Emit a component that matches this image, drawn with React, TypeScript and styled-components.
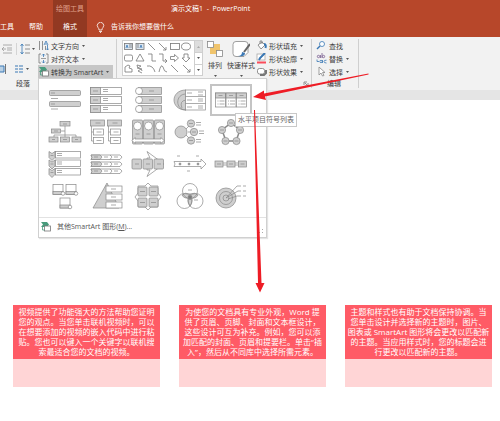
import React from "react";
import styled, { createGlobalStyle } from "styled-components";

const GlobalStyle = createGlobalStyle`
  * { box-sizing: border-box; }
  body { margin: 0; background: #fff; }
  body, button { font-family: "Open Sans", "Noto Sans CJK SC", sans-serif; }
  button { border: 0; padding: 0; margin: 0; background: none; color: inherit; cursor: pointer; }
  svg { display: block; flex: none; }
`;

const Page = styled.div`
  position: relative;
  font-size: 7px;
  line-height: 10px;
  color: #3a3a3a;
  white-space: nowrap;
`;

const Header = styled.header`
  display: flex;
  height: 37px;
  background: #b7472a;
  color: #fff;
`;
const Tabs = styled.nav`
  display: flex;
  align-items: flex-end;
  gap: 15px;
  width: 53px;
`;
const Tab = styled.button`
  font-size: 7px;
  line-height: 20px;
`;
const ContextTab = styled.div`
  display: flex;
  flex-direction: column;
  justify-content: space-between;
  align-items: center;
  width: 34px;
  background: #923922;
`;
const ContextLabel = styled.span`
  line-height: 17px;
  color: #e0a08c;
`;
const TitleArea = styled.div`
  display: flex;
  flex-direction: column;
  justify-content: space-between;
  flex: 1;
`;
const Title = styled.div`
  line-height: 17px;
  padding-left: 84px;
  white-space: pre;
`;
const TellMe = styled.button`
  display: flex;
  align-items: center;
  gap: 6px;
  padding-left: 9px;
  font-size: 7px;
  line-height: 20px;
`;

const Ribbon = styled.div`
  display: flex;
  height: 53px;
  background: #f2f2f2;
`;
const Group = styled.section<{ $width: number }>`
  display: flex;
  flex-direction: column;
  width: ${(p) => p.$width}px;
  margin: 2px 0 2px;
  border-right: 1px solid #cfcfcf;
`;
const GroupBody = styled.div`
  display: flex;
  height: 40px;
`;
const GroupLabel = styled.div<{ $left: number }>`
  display: flex;
  justify-content: space-between;
  padding-left: ${(p) => p.$left}px;
  line-height: 9px;
`;
const IconColumn = styled.div`
  display: flex;
  flex-direction: column;
  justify-content: space-around;
  width: 38px;
`;
const IconRow = styled.div`
  display: flex;
  align-items: center;
  gap: 4px;
`;
const Column = styled.div<{ $left?: number }>`
  display: flex;
  flex-direction: column;
  margin-left: ${(p) => p.$left ?? 0}px;
`;
const Command = styled.button<{ $active?: boolean }>`
  display: flex;
  align-items: center;
  gap: 2px;
  height: 13px;
  padding-right: 3px;
  font-size: 7px;
  background: ${(p) => (p.$active ? "#c6c6c6" : "transparent")};
`;
const BigCommand = styled.button`
  display: flex;
  flex-direction: column;
  align-items: center;
  gap: 3px;
  padding-top: 1px;
  margin-left: 4px;
  font-size: 7px;
  line-height: 10px;
`;
const Anchor = styled.div`
  position: relative;
`;
const Gallery = styled.div`
  display: grid;
  grid-template-columns: 71px 8px;
  height: 36px;
  margin: 1px 0 0 5px;
  border: 1px solid #cfcfcf;
  background: #fff;
`;
const Scroller = styled.div`
  display: grid;
  grid-template-rows: repeat(3, 1fr);
  border-left: 1px solid #cfcfcf;
`;
const ScrollButton = styled.button<{ $off?: boolean }>`
  display: grid;
  place-items: center;
  background: ${(p) => (p.$off ? "#dedede" : "#fff")};
  & + & { border-top: 1px solid #cfcfcf; }
`;
const Ruler = styled.div`
  height: 10px;
  background: #e5e5e5;
`;

const Menu = styled.div`
  position: absolute;
  z-index: 2;
  top: 13px;
  left: 0;
  width: 229px;
  background: #fff;
  border: 1px solid #d0d0d0;
  box-shadow: 1px 1px 1px #e4e4e4;
`;
const Layouts = styled.div`
  display: grid;
  grid-template-columns: repeat(5, 1fr);
  grid-auto-rows: 32px;
  padding: 5px 14px 5px 5px;
  border-bottom: 1px solid #e2e2e2;
`;
const Layout = styled.button<{ $selected?: boolean }>`
  display: grid;
  place-items: center;
  border: ${(p) => (p.$selected ? "2px solid #c4c4c4" : "0")};
  svg { margin: -2px; }
`;
const More = styled.button`
  display: flex;
  align-items: center;
  gap: 6px;
  width: 100%;
  height: 19px;
  padding: 0 2px 3px 1px;
  font-size: 7px;
  color: #555;
`;
const Grip = styled.span`
  align-self: flex-end;
  margin-left: auto;
`;
const Tooltip = styled.div`
  position: absolute;
  z-index: 3;
  top: 34px;
  left: 196px;
  padding: 1px 2px;
  background: #fff;
  border: 1px solid #c8c8c8;
  color: #666;
`;
const Cards = styled.main`
  display: grid;
  grid-template-columns: repeat(3, 1fr);
  gap: 19px;
  padding: 205px 8px 34px 13px;
`;
const Card = styled.article`
  background: #ffd5d6;
  padding-bottom: 28px;
`;
const CardText = styled.p`
  margin: 0;
  padding: 2px 0;
  background: #ff5b66;
  color: #fff;
  font-size: 8px;
  line-height: 10px;
  text-align: center;
`;
const Line = styled.span`
  display: block;
`;
const Arrows = styled.svg`
  position: absolute;
  z-index: 4;
  top: 70px;
  left: 248px;
  pointer-events: none;
`;

const Caret = () => (
  <svg width="5" height="4" viewBox="0 0 5 4"><path d="M1 1h3L2.500 3z" fill="#555" /></svg>
);

type IconName = "direction" | "align" | "smartart" | "fill" | "outline" | "effects" | "find" | "replace" | "select";
const icons: Record<IconName, React.ReactNode> = {
  direction: <><path d="M1.500 1v9M4.500 1v9" stroke="#777" /><path d="M7.500 6v4" stroke="#777" /><path d="M6 5l2-4 2 4M7 4h2M9.500 5v5M8 8.500l1.500 1.500L11 8.500" stroke="#3a78b5" fill="none" /></>,
  align: <><path d="M3 1H1v9h2M8 1h2v9H8" stroke="#777" fill="none" /><path d="M5.500 1v3M5.500 7v3M4 2.500L5.500 1 7 2.500M4 8.500L5.500 10 7 8.500" stroke="#3a78b5" fill="none" /><path d="M3 5.500h5" stroke="#888" /></>,
  smartart: <><path d="M1 1h6l2 2.500-2 2.500H1l2-2.500z" fill="#489b7c" /><rect x="4.500" y="5" width="6" height="5" fill="#fff" stroke="#777" /><path d="M2.500 5v4h2" stroke="#489b7c" fill="none" /></>,
  fill: <><path d="M2 5l4-3 3 3-4 4z" fill="#fff" stroke="#777" /><path d="M4 4V1h2v3" stroke="#777" fill="none" /><path d="M8 4c2 0 2 2 1.500 4" stroke="#3a78b5" strokeWidth="2" fill="none" /></>,
  outline: <><rect x="1" y="1" width="8" height="6" fill="#fff" stroke="#aaa" /><path d="M3 7l1-2 5-5" stroke="#3a78b5" strokeWidth="2" /><path d="M1 9.500h9" stroke="#fb4c5a" strokeWidth="2" /></>,
  effects: <><path d="M4 9h4l2-2V4" stroke="#777" strokeWidth="2" fill="none" /><rect x="1.500" y="2.500" width="7" height="5.500" rx="2" fill="#fff" stroke="#777" /></>,
  find: <><circle cx="6" cy="4" r="2.500" fill="#fff" stroke="#3a78b5" /><path d="M4 6L1 9" stroke="#3a78b5" strokeWidth="1.500" /></>,
  replace: <><g fill="none" stroke="#765a8e"><circle cx="2.500" cy="3.500" r="1.200" /><path d="M4.500 2v3M6 0v5" /><circle cx="7.500" cy="3.500" r="1.200" /></g><g fill="none" stroke="#3a78b5"><circle cx="5" cy="8.500" r="1.200" /><path d="M6.500 7v3M10.500 7.200Q8 7 8 8.500T10.500 10M1 6.500v2h2" /></g></>,
  select: <path d="M3 1v8l2-2 1.500 3L8 9.500 6.500 6.500h2.500z" fill="#fff" stroke="#888" />,
};
const Icon = ({ name }: { name: IconName }) => (
  <svg width="11" height="11" viewBox="0 0 11 11" strokeWidth=".8">{icons[name]}</svg>
);

const paletteShapes = (
  <svg width="70" height="34" viewBox="0 0 70 34" fill="none" stroke="#777" strokeWidth=".8">
    <rect x="1.500" y="2.500" width="8" height="6" fill="#dce6f0" /><path d="M3 7l1-3 1 3" stroke="#3a78b5" /><path d="M6 4h3M6 6h3" />
    <rect x="13" y="2.500" width="8" height="6" fill="#dce6f0" /><path d="M17 7l1-3 1 3" stroke="#3a78b5" /><path d="M14 4h2M14 6h2" />
    <path d="M25 2l7 7M36 2l7 7M43 6v3h-3" /><rect x="47.500" y="2.500" width="9" height="6" /><ellipse cx="63" cy="5.500" rx="4.500" ry="3.500" />
    <rect x="1.500" y="14" width="8" height="6" rx="1.500" /><path d="M13 20l4-7 4 7zM25 13h4v7h4M36 13h4v7h4M42 18l2 2-2 2M47.500 15.500h4v-2l4 3.500-4 3.500v-2h-4zM61 13h4v4h2l-4 4-4-4h2z" />
    <path d="M2 31V26l3-2 2 1-1 2 3 1v3zM14 24l4 1-3 2 3 1-3 2 4 2M14 24l1 4M18 27l1 3M24 25q6-1 8 6M36 31q2-9 4-5 1 5 4 5M48 24l7 7M60 24l7 7M67 28v3h-3" />
  </svg>
);

const arrange = (
  <svg width="16" height="18" viewBox="0 0 16 18"><path d="M3 4h10v10H3z" fill="#f0c46c" /><g fill="#fff" stroke="#888" strokeWidth=".8"><rect x=".5" y="1.500" width="6" height="6" /><rect x="9.500" y="10.500" width="6" height="6" /></g></svg>
);
const quickStyle = (
  <svg width="18" height="18" viewBox="0 0 18 18"><path d="M4 1.500h9a3 3 0 0 1 3 3v8l-4 4H4a3 3 0 0 1-3-3v-9a3 3 0 0 1 3-3z" fill="#fff" stroke="#888" strokeWidth=".8" /><path d="M18 4l-6 8" stroke="#666" strokeWidth="2" /><path d="M6 16q4 0 4-4l3 1q0 4-7 3z" fill="#3a78b5" /></svg>
);

const G = "#cfcfcf";
const layouts: { name: string; art: React.ReactNode }[] = [
  { name: "垂直项目符号列表", art: <><rect x="2.500" y="4.500" width="31" height="5" rx="1" fill={G} /><rect x="2.500" y="15.500" width="31" height="5" rx="1" fill={G} /><path d="M4 7h4M4 12.500h7M4 18h4M4 23h7" /></> },
  { name: "垂直块列表", art: [1.5, 10.5, 19.5].map((y) => <g key={y}><rect x="2.500" y={y} width="31" height="7" fill="#fff" /><rect x="2.500" y={y} width="10" height="7" fill={G} /><path d={`M5 ${y + 3.5}h5M15 ${y + 2}h5M15 ${y + 4}h5`} /></g>) },
  { name: "垂直图片列表", art: [1.5, 10.5, 19.5].map((y) => <g key={y}><rect x="8.500" y={y} width="23" height="7" fill={G} /><circle cx="9" cy={y + 3.5} r="3.500" fill="#fff" /><path d={`M19 ${y + 3.5}h5`} /></g>) },
  { name: "目标列表", art: <><path d="M14 4C-2 4-2 24 14 24z" fill={G} /><path d="M14 8C3 8 3 24 14 24M14 14Q7 15 10 22" fill="none" /><rect x="13.500" y="4" width="20" height="20" fill="#fff" /><path d="M13.500 10.500h20M13.500 17.500h20M15 7h5M15 14h5M15 21h5M26 6h5M26 9h5M26 13h5M26 15h5M26 20h5M26 22h5" /></> },
  { name: "水平项目符号列表", art: [2.5, 13, 23.5].map((x) => <g key={x}><rect x={x} y="7" width="10" height="14" fill="#fff" /><rect x={x} y="7" width="10" height="5" fill={G} /><path d={`M${x + 3} 9.500h4M${x + 2} 15h1M${x + 4} 15h5M${x + 2} 18h1M${x + 4} 18h5`} /></g>) },
  { name: "组织结构图", art: <><path d="M18 8v11M14 13h4M7 19v-2h22v2" fill="none" /><g fill={G}><rect x="13" y="3.500" width="10" height="4.500" /><rect x="4.500" y="11" width="9" height="4" /><rect x="2" y="19" width="9" height="5" /><rect x="13.500" y="19" width="9" height="5" /><rect x="25" y="19" width="9" height="5" /></g><path d="M16 6h4M7 13h4M5 21.500h3M16 21.500h4M28 21.500h3" /></> },
  { name: "层次结构列表", art: [2.5, 19.5].map((x) => <g key={x}><path d={`M${x + 1} 8v15h2M${x + 1} 14h2`} fill="none" /><rect x={x} y="2" width="14" height="6" fill={G} /><rect x={x + 3} y="11" width="10" height="6" fill="#fff" /><rect x={x + 3} y="19.500" width="10" height="6" fill="#fff" /><path d={`M${x + 5} 5h5M${x + 6} 14h5M${x + 6} 22.500h5`} /></g>) },
  { name: "连续图片列表", art: <>{[2.5, 13.5, 24.5].map((x) => <g key={x}><rect x={x} y="2" width="10" height="24" rx="1" fill={G} /><circle cx={x + 5} cy="8" r="4" fill="#fff" /><path d={`M${x + 3} 16h4`} /></g>)}<path d="M5 21h26v-1.500l3 3-3 3V24H5v1.500l-3-3 3-3z" fill="#fff" /></> },
  { name: "射线循环", art: <><path d="M14 11l4-4M16 14h6M14 17l4 4" /><circle cx="9" cy="14" r="6" fill={G} />{[[19, 5.5], [22, 14], [19, 22.5]].map(([x, y]) => <g key={y}><circle cx={x} cy={y} r="3.700" fill={G} /><path d={`M${x - 2} ${y}h4M${x + 5} ${y - 1}h5M${x + 5} ${y + 1.5}h5`} /></g>)}</> },
  { name: "基本循环", art: <><path d="M18 5l9 7-4 11H13L9 12z" fill="none" strokeWidth="1.500" />{[[18, 5], [9, 12], [27, 12], [12.5, 23], [23.5, 23]].map(([x, y]) => <g key={x}><circle cx={x} cy={y} r="3.600" fill={G} /><path d={`M${x - 2} ${y}h4`} /></g>)}</> },
  { name: "垂直V形列表", art: [1.5, 10, 18.5].map((y) => <g key={y}><rect x="8.500" y={y} width="25" height="6.500" fill="#fff" /><path d={`M2 ${y}l3 2 3-2v6l-3 3-3-3z`} fill={G} /><path d={`M3.500 ${y + 4}h3M10 ${y + 2}h5M10 ${y + 4}h5`} /></g>) },
  { name: "V形列表", art: [5, 12, 19].map((y) => <g key={y}><path d={`M3 ${y}h29l2 2-2 2.500H3l1-2z`} fill="#fff" /><path d={`M3 ${y}h9l2 2-2 2.500H3l1-2z`} fill={G} /><path d={`M22 ${y}l2 2-2 2.500M6 ${y + 2}h4M16 ${y + 2}h4M26 ${y + 2}h4`} fill="none" /></g>) },
  { name: "连续块流程", art: <><path d="M17 1.500L34 14 17 26.500 20 20h-3V8h3z" fill="#fff" />{[2, 13, 24].map((x) => <g key={x}><rect x={x} y="9" width="9.500" height="10" rx="1" fill={G} /><path d={`M${x + 3} 14h4`} /></g>)}</> },
  { name: "基本日程表", art: <><path d="M2 11.500h27V9l5 5-5 5v-2.500H2l1-2.500z" fill="#fff" /><g fill="#999"><circle cx="8" cy="14" r="1" /><circle cx="17" cy="14" r="1" /><circle cx="26" cy="14" r="1" /></g><path d="M5 6h3M24 6h3M15 21h3" /></> },
  { name: "基本流程", art: <><path d="M8 13h20M8 15h20" />{[2, 14, 25.5].map((x) => <g key={x}><rect x={x} y="11" width="8" height="6" fill={G} /><path d={`M${x + 2} 14h4`} /></g>)}</> },
  { name: "图片题注列表", art: [[6, 2.5], [19, 2.5], [13, 16]].map(([x, y]) => <g key={x}><rect x={x} y={y} width="10" height="10" fill="#fff" /><rect x={x} y={y + 7} width="10" height="3" fill={G} /><circle cx={x + 10} cy={y + 9} r="1.800" fill="#fff" /></g>) },
  { name: "棱锥型列表", art: <><path d="M5 26L19 1l12 25z" fill={G} />{[4, 12, 20].map((y) => <g key={y}><rect x="18" y={y} width="16" height="6" fill="#fff" /><path d={`M23 ${y + 3}h5`} /></g>)}</> },
  { name: "基本矩阵", art: <><path d="M18 1l3 3h7v7l3 4-3 4v6h-7l-3 3-3-3H8v-6l-3-4 3-4V4h7z" fill="#fff" />{[[8, 5], [19, 5], [8, 16], [19, 16]].map(([x, y]) => <g key={`${x}${y}`}><rect x={x} y={y} width="9" height="9" rx="1" fill={G} /><path d={`M${x + 2} ${y + 4.5}h5`} /></g>)}</> },
  { name: "基本维恩图", art: <><path d="M18 12q-5-2-8 1 2 4 8 3 6 1 8-3-3-3-8-1zM18 12q-4 6 0 12 4-6 0-12z" fill={G} /><g fill="none"><circle cx="18" cy="9" r="7.500" /><circle cx="12.500" cy="19" r="7.500" /><circle cx="23.500" cy="19" r="7.500" /></g><path d="M16 8h4M22 18h4" /><path d="M16 14h4l-2 4z" fill="#777" /></> },
  { name: "基本目标图", art: <><g fill={G}><circle cx="13" cy="16" r="10" /><circle cx="13" cy="16" r="6.500" /><circle cx="13" cy="16" r="3" /></g><path d="M13 16L24 4h4M13 16l12-7h3M15 17l9-3h4M30 4h3M30 9h3M30 14h3" fill="none" /></> },
];

const cards = [
  ["视频提供了功能强大的方法帮助您证明", "您的观点。当您单击联机视频时，可以", "在想要添加的视频的嵌入代码中进行粘", "贴。您也可以键入一个关键字以联机搜", "索最适合您的文档的视频。"],
  ["为使您的文档具有专业外观，Word 提", "供了页眉、页脚、封面和文本框设计，", "这些设计可互为补充。例如，您可以添", "加匹配的封面、页眉和提要栏。单击“插", "入”，然后从不同库中选择所需元素。"],
  ["主题和样式也有助于文档保持协调。当", "您单击设计并选择新的主题时，图片、", "图表或 SmartArt 图形将会更改以匹配新", "的主题。当应用样式时，您的标题会进", "行更改以匹配新的主题。"],
];

const Cmd = ({ icon, label, caret = true }: { icon: IconName; label: string; caret?: boolean }) => (
  <Command><Icon name={icon} />{label}{caret && <Caret />}</Command>
);

const SmartArtMenu = () => (
  <Menu>
    <Layouts>
      {layouts.map((l, i) => (
        <Layout key={l.name} aria-label={l.name} $selected={i === 4}>
          <svg width="36" height="28" viewBox="0 0 36 28" stroke="#888" strokeWidth=".7">{l.art}</svg>
        </Layout>
      ))}
    </Layouts>
    <More>
      <Icon name="smartart" />
      <span>其他SmartArt 图形(<u>M</u>)...</span>
      <Grip><svg width="5" height="5" viewBox="0 0 5 5" fill="#aaa"><path d="M3 0h1v1H3zM0 3h1v1H0zM3 3h1v1H3z" /></svg></Grip>
    </More>
    <Tooltip role="tooltip">水平项目符号列表</Tooltip>
  </Menu>
);

export default function App() {
  return (
    <Page>
      <GlobalStyle />
      <Header>
        <Tabs><Tab>工具</Tab><Tab>帮助</Tab></Tabs>
        <ContextTab><ContextLabel>绘图工具</ContextLabel><Tab>格式</Tab></ContextTab>
        <TitleArea>
          <Title>演示文稿1  -  PowerPoint</Title>
          <TellMe>
            <svg width="9" height="11" viewBox="0 0 9 11" fill="none" stroke="#fff" strokeWidth=".8"><path d="M3 8Q3 6.500 2 5.500a3.200 3.200 0 1 1 5 0Q6 6.500 6 8zM3 9.500h3M4 10.500h1" /></svg>
            告诉我你想要做什么
          </TellMe>
        </TitleArea>
      </Header>
      <Ribbon>
        <Group $width={117}>
          <GroupBody>
            <IconColumn>
              <IconRow>
                <svg width="36" height="12" viewBox="0 0 36 12" fill="none" stroke="#999" strokeWidth=".8"><path d="M3 2h9M7 5h5M7 7h5M3 10h9M6 6H2M4 4L2 6l2 2" /><path d="M16.500 0v12" stroke="#ccc" /><path d="M25 2h5M25 6h5M25 10h5" stroke="#777" /><path d="M22 1v10M20.500 3L22 1l1.500 2M20.500 9l1.500 2 1.500-2" stroke="#3a78b5" /><path d="M32 5h3l-1.500 2z" fill="#555" stroke="none" /></svg>
              </IconRow>
              <IconRow>
                <svg width="36" height="12" viewBox="0 0 36 12" fill="none" stroke="#3a78b5"><path d="M0 3h4v6H0" fill="#b9d0e4" /><path d="M5.500 1v10" stroke="#777" /><path d="M15 3h3M19 3h4M15 6h3M19 6h4M15 9h3M19 9h4" /><path d="M26 5h3l-1.500 2z" fill="#555" stroke="none" /></svg>
              </IconRow>
            </IconColumn>
            <Column>
              <Cmd icon="direction" label="文字方向" />
              <Cmd icon="align" label="对齐文本" />
              <Anchor>
                <Command $active aria-expanded="true"><Icon name="smartart" />转换为 SmartArt<Caret /></Command>
                <SmartArtMenu />
              </Anchor>
            </Column>
          </GroupBody>
          <GroupLabel $left={16}>段落</GroupLabel>
        </Group>
        <Group $width={195}>
          <GroupBody>
            <Gallery>
              {paletteShapes}
              <Scroller>
                <ScrollButton $off aria-label="向上"><svg width="5" height="4"><path d="M1 3h3L2.500 1z" fill="#aaa" /></svg></ScrollButton>
                <ScrollButton aria-label="向下"><Caret /></ScrollButton>
                <ScrollButton aria-label="更多形状"><Caret /></ScrollButton>
              </Scroller>
            </Gallery>
            <BigCommand>{arrange}排列<Caret /></BigCommand>
            <BigCommand>{quickStyle}快速样式<Caret /></BigCommand>
            <Column $left={1}>
              <Cmd icon="fill" label="形状填充" />
              <Cmd icon="outline" label="形状轮廓" />
              <Cmd icon="effects" label="形状效果" />
            </Column>
          </GroupBody>
          <GroupLabel $left={186}><svg width="6" height="9" viewBox="0 0 6 9" fill="none" stroke="#777" strokeWidth=".8"><path d="M1 6V3h3M2 4l3 3M5 4v3H2" /></svg></GroupLabel>
        </Group>
        <Group $width={47}>
          <GroupBody>
            <Column $left={4}>
              <Cmd icon="find" label="查找" caret={false} />
              <Cmd icon="replace" label="替换" />
              <Cmd icon="select" label="选择" />
            </Column>
          </GroupBody>
          <GroupLabel $left={15}>编辑</GroupLabel>
        </Group>
      </Ribbon>
      <Ruler />
      <Cards>
        {cards.map((lines) => (
          <Card key={lines[0]}><CardText>{lines.map((l) => <Line key={l}>{l}</Line>)}</CardText></Card>
        ))}
      </Cards>
      <Arrows width="124" height="224" viewBox="248 70 124 224" fill="#ee1c25" aria-hidden="true">
        <path d="M368.500 73.500L264 93.500 264 90.500 253 97 266 100 265 96.500 368.500 74.500z" />
        <path d="M254 110h1L261.500 283h3L260 292.500 255.500 283h2.500z" />
      </Arrows>
    </Page>
  );
}
